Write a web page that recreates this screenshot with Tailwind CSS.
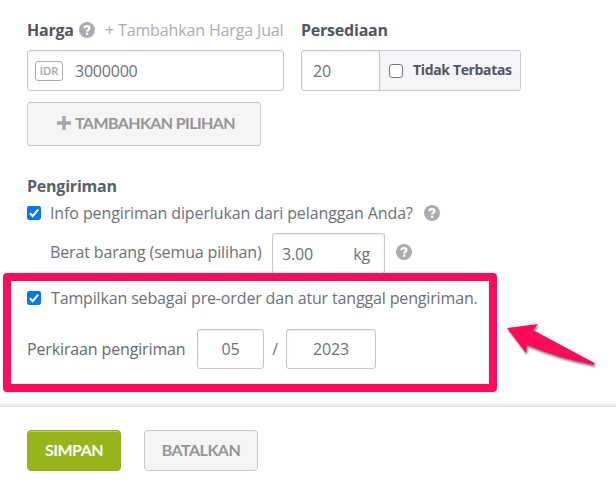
<!DOCTYPE html>
<html lang="id">
<head>
    <meta charset="UTF-8">
    <meta name="viewport" content="width=device-width, initial-scale=1.0">
    <title>Produk</title>
    <script src="https://cdn.jsdelivr.net/npm/@tailwindcss/browser@4"></script>
</head>
<body class="bg-white overflow-hidden">
    <svg class="hidden">
        <symbol id="help" viewBox="0 0 16 16">
            <circle cx="8" cy="8" r="8" fill="#a7adb2"/>
            <path d="M5.400 6.300C5.500 4.800 6.600 4.200 8 4.200c1.500 0 2.400.8 2.400 1.900 0 1.800-2.300 1.600-2.300 3.400" fill="none" stroke="#fff" stroke-width="2.200"/>
            <rect x="7" y="10.700" width="2.200" height="2.200" fill="#fff"/>
        </symbol>
        <symbol id="checked" viewBox="0 0 13 13">
            <rect width="13" height="13" rx="2" fill="#0075ff"/>
            <path d="M2.700 6.800l2.600 2.600 5.100-6" fill="none" stroke="#fff" stroke-width="2"/>
        </symbol>
    </svg>

    <form class="relative flex flex-col w-[616px] h-[480px] font-['Open_Sans',sans-serif] text-base leading-6 tracking-[-0.14px] text-[#6b717b] whitespace-nowrap">
        <div class="flex gap-[17px] pl-[27px] pt-[18px]">
            <div class="w-[257px]">
                <div class="flex items-center h-6">
                    <label class="w-[52px] shrink-0 font-bold tracking-[-0.22px] text-[#50565f]">Harga</label>
                    <svg class="w-4 h-4 shrink-0"><use href="#help"/></svg>
                    <a class="ml-[10px] text-[#a9adb1]">+ Tambahkan Harga Jual</a>
                </div>
                <div class="flex items-center h-[41px] mt-2 pl-[7px] rounded-[3px] border border-[#c4c7cd] shadow-[inset_0_1px_2px_#00000014]">
                    <span class="flex items-center justify-center w-7 h-5 rounded-[3px] border border-[#a9adb1] text-[#a9adb1] text-[11px] tracking-normal font-bold font-[Lato,sans-serif]">IDR</span>
                    <span class="ml-3 tracking-[-0.22px]">3000000</span>
                </div>
            </div>
            <div class="w-[220px]">
                <label class="block h-6 font-bold tracking-[-0.22px] text-[#50565f]">Persediaan</label>
                <div class="flex h-[41px] mt-2 rounded-[3px] border border-[#c4c7cd] overflow-hidden">
                    <span class="flex items-center w-[78px] pl-[11px] border-r border-[#c4c7cd] shadow-[inset_0_1px_2px_#00000014]">20</span>
                    <span class="flex items-center flex-1 pl-[9px] bg-[#f4f5f8]">
                        <span class="w-[14px] h-[14px] shrink-0 rounded-[3px] border border-[#767676] bg-white"></span>
                        <b class="ml-[10px] -mt-[2px] text-sm tracking-[-0.35px] text-[#50565f]">Tidak Terbatas</b>
                    </span>
                </div>
            </div>
        </div>

        <button type="button" class="flex items-center w-[234px] h-11 ml-[27px] mt-[11px] pl-[29px] pb-[3px] rounded-[3px] border border-[#c8c8c8] bg-[#f5f5f5] text-[#959595] font-[Lato,sans-serif] font-bold tracking-[-0.6px]">
            <svg class="w-[14px] h-[14px] mr-1" viewBox="0 0 14 14"><path d="M7 0v14M0 7h14" stroke="#a5a8ac" stroke-width="3.400"/></svg>
            TAMBAHKAN PILIHAN
        </button>

        <div class="h-6 ml-[27px] mt-7 font-bold tracking-[-0.22px] text-[#54626a]">Pengiriman</div>
        <div class="flex items-center h-6 ml-[27px] mt-[3px]">
            <svg class="w-[14px] h-[14px] mr-[9px]"><use href="#checked"/></svg>
            <span class="w-[374px] tracking-[-0.11px]">Info pengiriman diperlukan dari pelanggan Anda?</span>
            <svg class="w-4 h-4"><use href="#help"/></svg>
        </div>
        <div class="flex h-[41px] ml-[50px] mt-2">
            <span class="w-[222px] pt-[7px]">Berat barang (semua pilihan)</span>
            <div class="flex items-center justify-between w-[113px] pl-[9px] pr-[14px] rounded-[3px] border border-[#c4c7cd] shadow-[inset_0_1px_2px_#00000014]">
                <span>3.00</span><span>kg</span>
            </div>
            <svg class="w-4 h-4 ml-[11px] mt-[11px]"><use href="#help"/></svg>
        </div>

        <div class="w-[494px] h-[119px] ml-[3px] -mt-px pl-4 pt-[5px] rounded-[4px] border-8 border-[#ff0b59] bg-white">
            <div class="flex items-center h-6">
                <svg class="w-[14px] h-[14px] mr-[10px]"><use href="#checked"/></svg>
                <span class="tracking-[-0.15px]">Tampilkan sebagai pre-order dan atur tanggal pengiriman.</span>
            </div>
            <div class="flex items-center h-10 mt-[19px]">
                <span class="w-[170px] text-[#616c72]">Perkiraan pengiriman</span>
                <span class="flex items-center justify-center w-[67px] h-10 rounded-[3px] border border-[#c4c7cd] shadow-[inset_0_1px_2px_#00000014]">05</span>
                <span class="w-[22px] text-center">/</span>
                <span class="flex items-center justify-center w-[90px] h-10 rounded-[3px] border border-[#c4c7cd] shadow-[inset_0_1px_2px_#00000014]">2023</span>
            </div>
        </div>

        <div class="h-[5px] mt-[10px] border-b border-[#dedede] bg-linear-to-b from-white to-[#e9e9e9]"></div>
        <div class="flex gap-[23px] ml-[27px] mt-[23px] font-[Lato,sans-serif] font-bold text-base tracking-[-0.5px]">
            <button type="submit" class="w-[94px] h-[41px] pb-px rounded-[4px] bg-[#95b51b] border border-[#91b015] text-white shadow-[inset_0_1px_0_#ffffff55]">SIMPAN</button>
            <button type="button" class="w-[114px] h-[41px] pb-px rounded-[4px] bg-[#f5f5f5] border border-[#c8c8c8] text-[#959595]">BATALKAN</button>
        </div>

        <!-- arrow pointing at the pre-order settings -->
        <svg class="absolute left-[500px] top-[315px] w-[105px] h-[60px] drop-shadow-[1px_2px_1px_#00000088]" viewBox="500 315 105 60">
            <path d="M507 328L538 324L533 330L594.500 363L594 365Q558 358 527 345L526 353Z" fill="#ff0b59"/>
        </svg>
    </form>
</body>
</html>
